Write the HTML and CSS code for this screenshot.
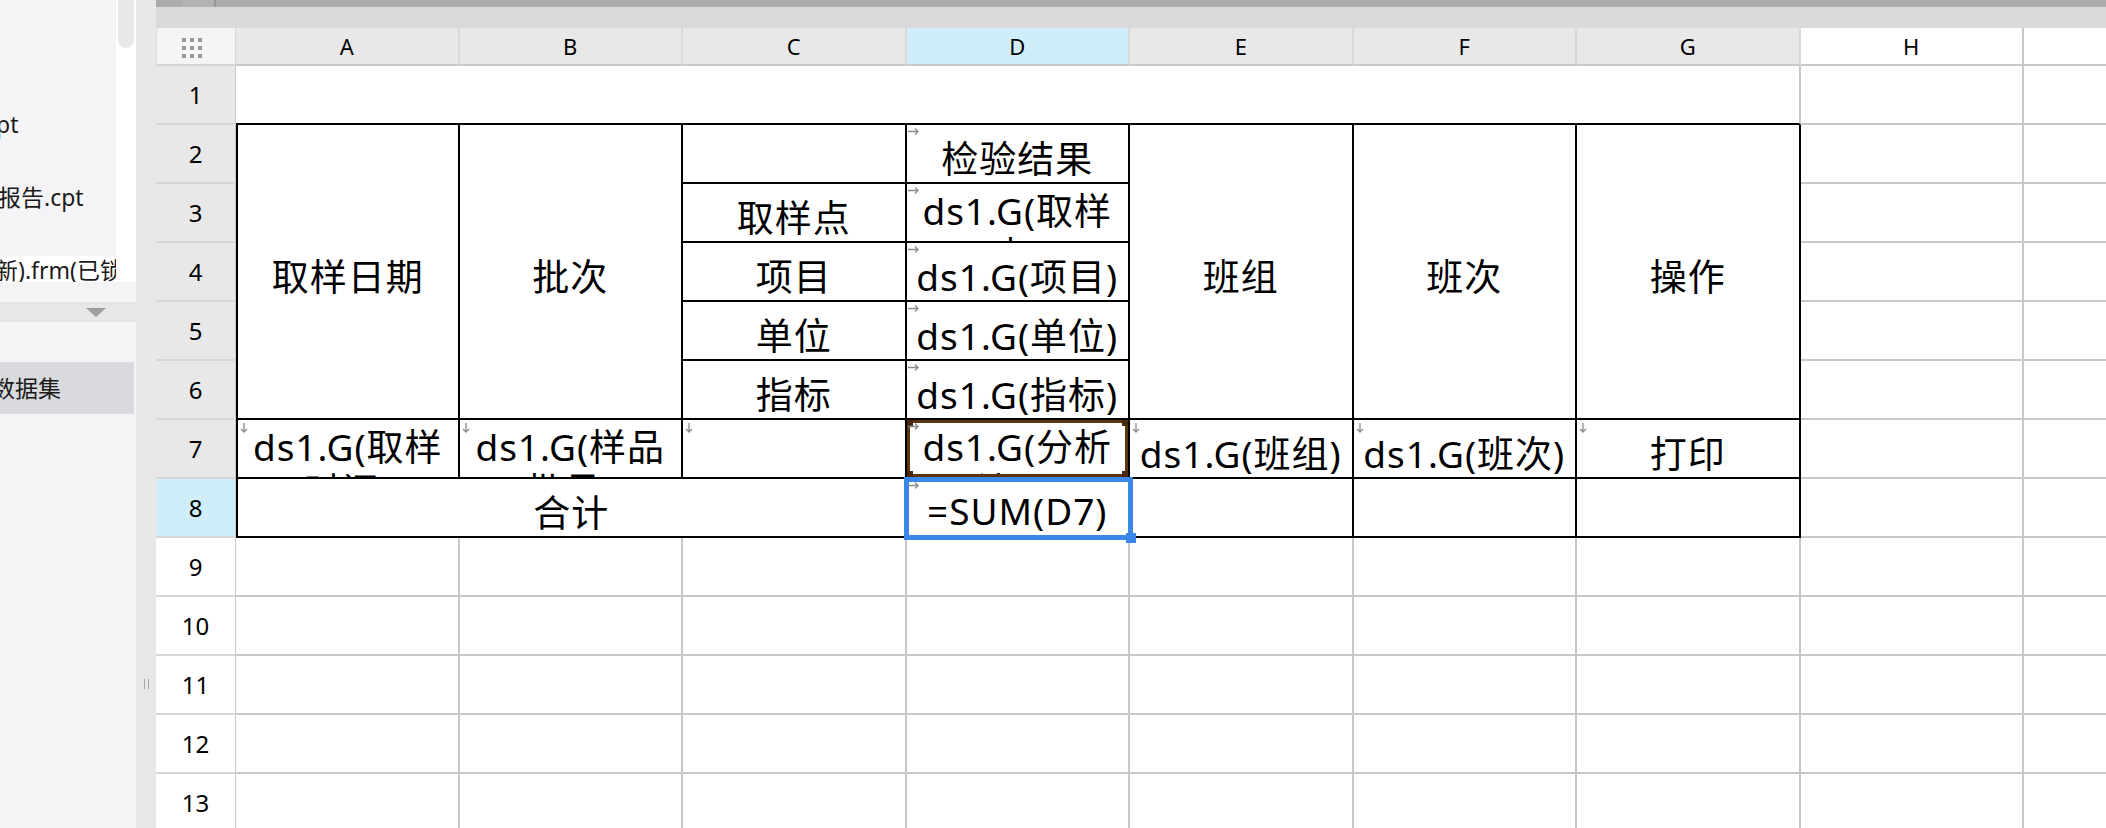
FILE: index.html
```html
<!DOCTYPE html>
<html lang="zh-CN">
<head>
  <meta charset="UTF-8" />
  <title>报表设计器</title>
  <link rel="stylesheet" href="styles.css">
</head>
<body>
  <div class="sidebar">
    <div class="tree">
      <div class="files">
        <div class="file f1">pt</div>
        <div class="file f2">报告.cpt</div>
        <div class="file f3 cur">新).frm(已锁定)</div>
      </div>
      <div class="vscroll"><div class="thumb"></div></div>
    </div>
    <div class="fold">
      <svg width="20" height="10" viewBox="0 0 20 10"><polygon points="0,1 20,1 10,10" fill="#9d9d9f"/></svg>
    </div>
    <div class="ds">数据集</div>
  </div>

  <div class="splitter"><div class="grip"></div></div>

  <div class="main">
    <div class="hbar"><span class="hb-a"></span><span class="hb-b"></span></div>
    <div class="toolbar"></div>

    <div class="sheet">
      <!-- column header -->
      <div class="corner">
        <svg width="20" height="20" viewBox="0 0 20 20">
          <rect x="0" y="0" width="4" height="4"/><rect x="8" y="0" width="4" height="4"/><rect x="16" y="0" width="4" height="4"/>
          <rect x="0" y="8" width="4" height="4"/><rect x="8" y="8" width="4" height="4"/><rect x="16" y="8" width="4" height="4"/>
          <rect x="0" y="16" width="4" height="4"/><rect x="8" y="16" width="4" height="4"/><rect x="16" y="16" width="4" height="4"/>
        </svg>
      </div>
      <div class="ch">A</div>
      <div class="ch">B</div>
      <div class="ch">C</div>
      <div class="ch on">D</div>
      <div class="ch">E</div>
      <div class="ch">F</div>
      <div class="ch">G</div>
      <div class="ch off">H</div>
      <div class="ch off"></div>

      <!-- row 1 -->
      <div class="rh">1</div>
      <div class="cell span7 title"></div>
      <div class="cell"></div>
      <div class="cell"></div>

      <!-- row 2 -->
      <div class="rh">2</div>
      <div class="cell t l rows5 m">取样日期</div>
      <div class="cell t rows5 m">批次</div>
      <div class="cell t"></div>
      <div class="cell t m"><svg class="arr" width="11" height="7" viewBox="0 0 11 7"><path d="M0 3.5H10M7 0.5L10 3.5L7 6.5"/></svg>检验结果</div>
      <div class="cell t rows5 m">班组</div>
      <div class="cell t rows5 m">班次</div>
      <div class="cell t rows5 m">操作</div>
      <div class="cell"></div>
      <div class="cell"></div>

      <!-- row 3 -->
      <div class="rh">3</div>
      <div class="cell t m">取样点</div>
      <div class="cell t w"><svg class="arr" width="11" height="7" viewBox="0 0 11 7"><path d="M0 3.5H10M7 0.5L10 3.5L7 6.5"/></svg>ds1.G(取样点)</div>
      <div class="cell"></div>
      <div class="cell"></div>

      <!-- row 4 -->
      <div class="rh">4</div>
      <div class="cell t m">项目</div>
      <div class="cell t m"><svg class="arr" width="11" height="7" viewBox="0 0 11 7"><path d="M0 3.5H10M7 0.5L10 3.5L7 6.5"/></svg>ds1.G(项目)</div>
      <div class="cell"></div>
      <div class="cell"></div>

      <!-- row 5 -->
      <div class="rh">5</div>
      <div class="cell t m">单位</div>
      <div class="cell t m"><svg class="arr" width="11" height="7" viewBox="0 0 11 7"><path d="M0 3.5H10M7 0.5L10 3.5L7 6.5"/></svg>ds1.G(单位)</div>
      <div class="cell"></div>
      <div class="cell"></div>

      <!-- row 6 -->
      <div class="rh">6</div>
      <div class="cell t m">指标</div>
      <div class="cell t m"><svg class="arr" width="11" height="7" viewBox="0 0 11 7"><path d="M0 3.5H10M7 0.5L10 3.5L7 6.5"/></svg>ds1.G(指标)</div>
      <div class="cell"></div>
      <div class="cell"></div>

      <!-- row 7 -->
      <div class="rh">7</div>
      <div class="cell t l w"><svg class="arr down" width="8" height="10" viewBox="0 0 8 10"><path d="M4 0V9M1 6L4 9L7 6"/></svg>ds1.G(取样时间)</div>
      <div class="cell t w"><svg class="arr down" width="8" height="10" viewBox="0 0 8 10"><path d="M4 0V9M1 6L4 9L7 6"/></svg>ds1.G(样品批号)</div>
      <div class="cell t"><svg class="arr down" width="8" height="10" viewBox="0 0 8 10"><path d="M4 0V9M1 6L4 9L7 6"/></svg></div>
      <div class="cell t w picked">
        <span class="frame"><i class="k tl"></i><i class="k tr"></i><i class="k bl"></i><i class="k br"></i></span>
        <svg class="arr" width="11" height="7" viewBox="0 0 11 7"><path d="M0 3.5H10M7 0.5L10 3.5L7 6.5"/></svg>ds1.G(分析结果)
      </div>
      <div class="cell t m"><svg class="arr down" width="8" height="10" viewBox="0 0 8 10"><path d="M4 0V9M1 6L4 9L7 6"/></svg>ds1.G(班组)</div>
      <div class="cell t m"><svg class="arr down" width="8" height="10" viewBox="0 0 8 10"><path d="M4 0V9M1 6L4 9L7 6"/></svg>ds1.G(班次)</div>
      <div class="cell t m"><svg class="arr down" width="8" height="10" viewBox="0 0 8 10"><path d="M4 0V9M1 6L4 9L7 6"/></svg>打印</div>
      <div class="cell"></div>
      <div class="cell"></div>

      <!-- row 8 -->
      <div class="rh on">8</div>
      <div class="cell t l span3 m">合计</div>
      <div class="cell t m sel">
        <span class="cursor"><i class="handle"></i></span>
        <svg class="arr" width="11" height="7" viewBox="0 0 11 7"><path d="M0 3.5H10M7 0.5L10 3.5L7 6.5"/></svg>=SUM(D7)
      </div>
      <div class="cell t"></div>
      <div class="cell t"></div>
      <div class="cell t"></div>
      <div class="cell"></div>
      <div class="cell"></div>

      <!-- empty rows -->
      <div class="rh off">9</div>
      <div class="cell"></div><div class="cell"></div><div class="cell"></div><div class="cell"></div><div class="cell"></div><div class="cell"></div><div class="cell"></div><div class="cell"></div><div class="cell"></div>
      <div class="rh off">10</div>
      <div class="cell"></div><div class="cell"></div><div class="cell"></div><div class="cell"></div><div class="cell"></div><div class="cell"></div><div class="cell"></div><div class="cell"></div><div class="cell"></div>
      <div class="rh off">11</div>
      <div class="cell"></div><div class="cell"></div><div class="cell"></div><div class="cell"></div><div class="cell"></div><div class="cell"></div><div class="cell"></div><div class="cell"></div><div class="cell"></div>
      <div class="rh off">12</div>
      <div class="cell"></div><div class="cell"></div><div class="cell"></div><div class="cell"></div><div class="cell"></div><div class="cell"></div><div class="cell"></div><div class="cell"></div><div class="cell"></div>
      <div class="rh off">13</div>
      <div class="cell"></div><div class="cell"></div><div class="cell"></div><div class="cell"></div><div class="cell"></div><div class="cell"></div><div class="cell"></div><div class="cell"></div><div class="cell"></div>
    </div>
  </div>
</body>
</html>
```

FILE: styles.css
```css
body {
  margin: 0;
  display: flex;
  height: 100vh;
  overflow: hidden;
  font-family: "Noto Sans", "Noto Sans CJK SC", sans-serif;
  color: #000;
  background-color: #fff;
}

/* left panel */
.sidebar {
  width: 136px;
  flex: none;
  display: flex;
  flex-direction: column;
  background-color: #f4f4f6;
}
.tree {
  height: 282px;
  display: flex;
}
.files {
  width: 116px;
  overflow: hidden;
  padding-top: 88px;
  box-sizing: border-box;
  font-size: 23px;
  color: #1a1a1a;
}
.file {
  height: 73px;
  line-height: 73px;
  white-space: nowrap;
}
.file.f1 { text-indent: -4px; }
.file.f2 { text-indent: -2px; }
.file.f3 { text-indent: -5px; }
.file.cur {
  background: linear-gradient(#f4f4f6 0 22px, #fff 22px);
}
.vscroll {
  width: 20px;
  background-color: #fff;
}
.thumb {
  width: 16px;
  height: 48px;
  margin-left: 2px;
  background-color: #e8e8ea;
  border-radius: 0 0 8px 8px;
}
.fold {
  height: 20px;
  margin-top: 20px;
  background-color: #e7e7e9;
  display: flex;
  align-items: center;
  justify-content: flex-end;
  padding-right: 30px;
}
.ds {
  margin-top: 40px;
  width: 134px;
  height: 52px;
  line-height: 52px;
  background-color: #d9dadd;
  font-size: 23px;
  color: #1a1a1a;
  white-space: nowrap;
  overflow: hidden;
  text-indent: -8px;
}

.splitter {
  width: 20px;
  flex: none;
  background-color: #e8e8e8;
  display: flex;
  justify-content: center;
}
.grip {
  margin-top: 679px;
  width: 3px;
  height: 10px;
  border-left: 1px solid #a6a6a6;
  border-right: 1px solid #a6a6a6;
}

/* sheet area */
.main {
  flex: 1;
  display: flex;
  flex-direction: column;
  overflow: hidden;
}
.hbar {
  height: 7px;
  flex: none;
  display: flex;
  background-color: #ababab;
}
.hb-a {
  width: 26px;
}
.hb-b {
  width: 32px;
  background-color: #b3b3b3;
  border-right: 2px solid #969696;
}
.toolbar {
  height: 21px;
  flex: none;
  background-color: #dadadc;
}

.sheet {
  display: grid;
  grid-template-columns: 80px repeat(9, 223.5px);
  grid-template-rows: 38px repeat(13, 59px);
}
.corner {
  background-color: #f4f4f6;
  border-bottom: 2px solid #d6d6d9;
  border-right: 1px solid #d6d6d9;
  border-left: 1px solid #dcdcde;
  box-sizing: border-box;
  display: flex;
  align-items: center;
  justify-content: center;
  padding-right: 8px;
  padding-top: 4px;
}
.corner svg {
  fill: #999;
}
.ch {
  background-color: #e8e8e8;
  border-right: 2px solid #d9d9d9;
  border-bottom: 2px solid #c8c8c8;
  box-sizing: border-box;
  display: flex;
  align-items: center;
  justify-content: center;
  font-size: 22px;
}
.ch.on { background-color: #cfeefa; }
.ch.off {
  background-color: #fff;
  border-right-color: #c8c8c8;
}
.rh {
  background-color: #e8e8e8;
  border-bottom: 2px solid #d6d6da;
  border-right: 1px solid #c8c8c8;
  box-sizing: border-box;
  display: flex;
  align-items: center;
  justify-content: center;
  font-size: 24px;
}
.rh.on { background-color: #d0eef9; }
.rh.off { background-color: #fff; }

.cell {
  position: relative;
  overflow: hidden;
  box-sizing: border-box;
  background-color: #fff;
  border-right: 2px solid #c8c8c8;
  border-bottom: 2px solid #c8c8c8;
  font-size: 37px;
  letter-spacing: 1px;
  white-space: nowrap;
}
.cell.t {
  border-right-color: #000;
  border-bottom-color: #000;
}
.cell.l { border-left: 2px solid #000; }
.cell.title { border-bottom-color: #000; }
.span7 { grid-column: span 7; }
.span3 { grid-column: span 3; }
.rows5 { grid-row: span 5; }

/* one line, centred */
.cell.m {
  display: flex;
  align-items: center;
  justify-content: center;
  padding-top: 6px;
}
/* wrapped text, starts at the top and is cut by the cell */
.cell.w {
  white-space: normal;
  text-align: center;
  line-height: 44px;
  padding-top: 5px;
}

.arr {
  position: absolute;
  top: 3px;
  left: 1px;
  fill: none;
  stroke: #8a8a8a;
  stroke-width: 1.3;
}
.arr.down { left: 2px; }

.picked .frame {
  position: absolute;
  inset: 0;
  border: 3px solid #5b3412;
}
.k {
  position: absolute;
  width: 6px;
  height: 6px;
  background-color: #4a2708;
}
.k.tl { top: -3px; left: -3px; }
.k.tr { top: -3px; right: -3px; }
.k.bl { bottom: -3px; left: -3px; }
.k.br { bottom: -3px; right: -3px; }

.cell.sel {
  overflow: visible;
  z-index: 2;
}
.cursor {
  position: absolute;
  top: -2px;
  left: -3px;
  right: -5px;
  bottom: -4px;
  border: 5px solid #3a86e9;
}
.handle {
  position: absolute;
  right: -8px;
  bottom: -8px;
  width: 10px;
  height: 10px;
  background-color: #3a86e9;
}
```
